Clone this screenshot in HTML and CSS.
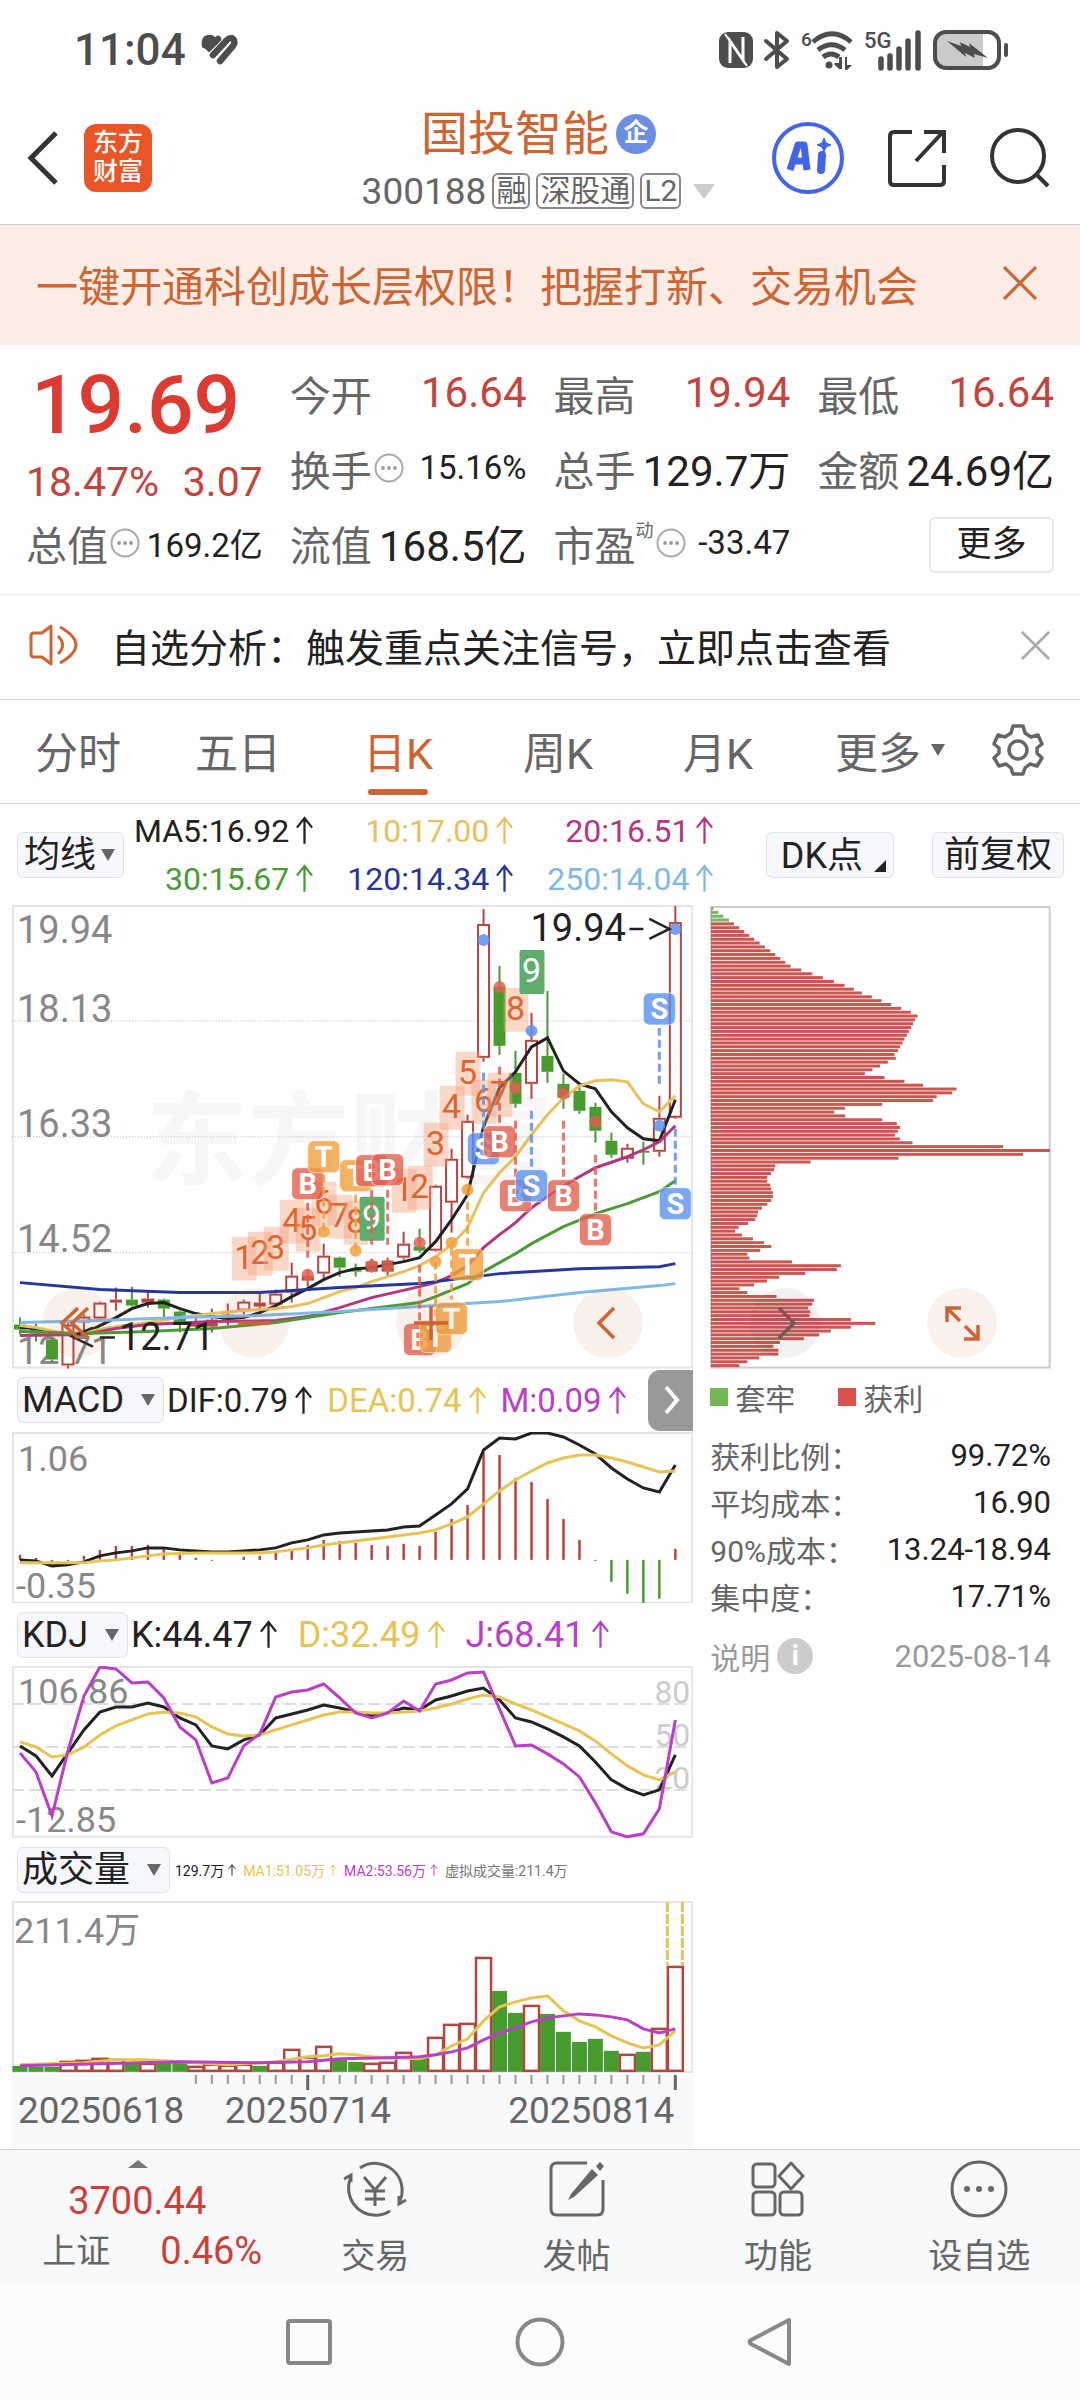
FILE: index.html
```html
<!DOCTYPE html>
<html lang="zh-CN">
<head>
    <meta charset="UTF-8">
    <meta name="viewport" content="width=device-width, initial-scale=1.0">
    <title>国投智能 300188</title>
    <link rel="stylesheet" href="styles.css">
</head>
<body>
    <!-- shared icons -->
    <svg width="0" height="0" class="sprite" aria-hidden="true">
        <symbol id="up" viewBox="0 0 20 30"><path d="M10 29V3M2 12l8-10 8 10" fill="none" stroke="currentColor" stroke-width="2.4"/></symbol>
        <symbol id="caret" viewBox="0 0 14 12"><path d="M0 0h14l-7 12z" fill="currentColor"/></symbol>
        <symbol id="dots" viewBox="0 0 30 30"><circle cx="15" cy="15" r="13.5" fill="none" stroke="#aaa" stroke-width="2"/><g fill="#999"><circle cx="9" cy="15" r="1.9"/><circle cx="15" cy="15" r="1.9"/><circle cx="21" cy="15" r="1.9"/></g></symbol>
        <symbol id="close" viewBox="0 0 32 32"><path d="M1 1l30 30M31 1L1 31" fill="none" stroke="currentColor" stroke-width="3"/></symbol>
    </svg>

    <div class="status-bar">
        <div class="status-left">
            <span>11:04</span>
            <svg width="37" height="32" viewBox="0 0 37 32" fill="none" stroke="#4d4d4d" stroke-width="6.5" stroke-linecap="round"><path d="M4 11C3 3 10 2 14 8" fill="#4d4d4d"/><path d="M5 11l3 3L17 5M12 21L26 6c5-5 10 1 6 6L19 27"/></svg>
        </div>
        <div class="status-right">
            <svg width="34" height="36" viewBox="0 0 34 36"><rect width="34" height="36" rx="9" fill="#4d4d4d"/><path d="M11 31V9l13 19V5" fill="none" stroke="#fff" stroke-width="3"/><path d="M6 2l5 7M28 34l-4-6" stroke="#fff" stroke-width="2"/></svg>
            <svg width="26" height="38" viewBox="0 0 26 38"><path d="M2 10l21 18-10 8V2l10 8L2 28" fill="none" stroke="#4d4d4d" stroke-width="4" stroke-linejoin="round" stroke-linecap="round"/></svg>
            <svg width="52" height="40" viewBox="0 0 52 40"><text x="0" y="16" font-size="19" font-weight="500">6</text><g fill="none" stroke="#4d4d4d" stroke-width="5"><path d="M12 12c12-11 26-11 38 0M17 20c9-7 18-7 27 0M22 27c5-4 11-4 16 0"/></g><circle cx="28" cy="35" r="3.5" fill="#4d4d4d"/><path d="M34 33h4v-6h3v12h-3l-5-5zM44 27h2v8h5l-5 5h-2z" fill="#4d4d4d"/></svg>
            <svg width="58" height="40" viewBox="0 0 58 40"><text x="0" y="18" font-size="22" font-weight="500">5G</text><path d="M17 38V29M26 38V26M35 38V19M44 38V11M54 38V3" stroke="#4d4d4d" stroke-width="5.5" stroke-linecap="round"/></svg>
            <svg width="76" height="40" viewBox="0 0 76 40"><path d="M12 4h38v32H12Q4 36 4 28V12Q4 4 12 4z" fill="#cacaca"/><rect x="2" y="2" width="64" height="36" rx="11" fill="none" stroke="#4d4d4d" stroke-width="4"/><path d="M14 11l14 5-1-4 10 5-1-4 19 15-14-4 1 4-10-5 1 4z" fill="#4d4d4d"/><path d="M73 15v10" stroke="#4d4d4d" stroke-width="4" stroke-linecap="round"/></svg>
        </div>
    </div>

    <header class="app-header">
        <div class="header-side">
            <button aria-label="返回"><svg width="31" height="54" viewBox="0 0 31 54"><path d="M29 2L4 27l25 25" fill="none" stroke="#333" stroke-width="5"/></svg></button>
            <div class="logo">东方<br>财富</div>
        </div>
        <div class="header-title">
            <h1>国投智能<span class="badge">企</span></h1>
            <div class="header-code">300188<span class="tag">融</span><span class="tag">深股通</span><span class="tag">L2</span><svg class="code-caret" width="22" height="15" viewBox="0 0 14 12" preserveAspectRatio="none"><path d="M0 0h14l-7 12z" fill="#ccc"/></svg></div>
        </div>
        <div class="header-side header-actions">
            <button aria-label="AI"><svg width="72" height="72" viewBox="0 0 72 72" fill="none" stroke="#4263eb"><circle cx="36" cy="36" r="34" stroke-width="4"/><path d="M18 48l8-25h6l3 25M20 39h14" stroke-width="7" stroke-linejoin="round"/><path d="M50 33l-1 15" stroke-width="8" stroke-linecap="round"/><path d="M52 16l2 5 5 2-5 2-2 5-2-5-5-2 5-2z" fill="#4263eb" stroke-width="1"/></svg></button>
            <button aria-label="分享"><svg width="58" height="58" viewBox="0 0 58 58" fill="none" stroke="#333" stroke-width="4"><path d="M24 3H6Q2 3 2 7v45q0 4 4 4h46q4 0 4-4V36M36 3h20v21M55 3L28 32"/></svg></button>
            <button aria-label="搜索"><svg width="60" height="60" viewBox="0 0 60 60" fill="none" stroke="#333" stroke-width="4"><circle cx="28" cy="28" r="26"/><path d="M46 46l12 12"/></svg></button>
        </div>
    </header>

    <section class="promo">
        <span>一键开通科创成长层权限！把握打新、交易机会</span>
        <button aria-label="关闭"><svg width="34" height="34"><use href="#close"/></svg></button>
    </section>

    <section class="quote">
        <div class="price-block">
            <div class="price">19.69</div>
            <div class="change"><span>18.47%</span><span>3.07</span></div>
        </div>
        <div class="cell"><span class="name">今开</span><span class="value up">16.64</span></div>
        <div class="cell"><span class="name">最高</span><span class="value up">19.94</span></div>
        <div class="cell"><span class="name">最低</span><span class="value up">16.64</span></div>
        <div class="cell"><span class="name">换手</span><svg width="30" height="30"><use href="#dots"/></svg><span class="value small">15.16%</span></div>
        <div class="cell"><span class="name">总手</span><span class="value">129.7万</span></div>
        <div class="cell"><span class="name">金额</span><span class="value">24.69亿</span></div>
        <div class="cell"><span class="name">总值</span><svg width="30" height="30"><use href="#dots"/></svg><span class="value small">169.2亿</span></div>
        <div class="cell"><span class="name">流值</span><span class="value">168.5亿</span></div>
        <div class="cell"><span class="name">市盈<sup>动</sup></span><svg width="30" height="30"><use href="#dots"/></svg><span class="value small">-33.47</span></div>
        <div class="cell cell-more"><button class="more-btn">更多</button></div>
    </section>

    <section class="notice">
        <svg width="50" height="42" viewBox="0 0 50 42" fill="none" stroke="#cd6432" stroke-width="3"><path d="M22 2L13 9H5q-3 0-3 3v18q0 3 3 3h8l9 7zM29 12q9 9 0 18M31 3q32 18 0 36" stroke-linejoin="round"/></svg>
        <p>自选分析：触发重点关注信号，立即点击查看</p>
        <button aria-label="关闭"><svg width="29" height="29"><use href="#close"/></svg></button>
    </section>

    <nav class="tabs">
        <button>分时</button>
        <button>五日</button>
        <button class="active">日K</button>
        <button>周K</button>
        <button>月K</button>
        <button>更多<svg class="tab-caret" width="14" height="12"><use href="#caret"/></svg></button>
        <button aria-label="设置"><svg width="52" height="52" viewBox="0 0 52 52" fill="none" stroke="#666" stroke-width="3.5" stroke-linejoin="round"><path d="M21 2h10l2 7 6 4 7-2 4 9-5 4v5l5 5-5 8-7-2-5 4-2 6H21l-2-6-5-4-7 2-5-8 5-5v-5l-5-4 4-9 7 2 6-4z"/><circle cx="26" cy="26" r="9"/></svg></button>
    </nav>

    <section class="averages">
        <div class="picker picker-tight">
            <select aria-label="主图指标"><option>均线</option></select>
            <svg width="14" height="12"><use href="#caret"/></svg>
        </div>
        <div class="ma-grid">
            <span class="c-black">MA5:16.92<svg><use href="#up"/></svg></span>
            <span class="c-yellow">10:17.00<svg><use href="#up"/></svg></span>
            <span class="c-magenta">20:16.51<svg><use href="#up"/></svg></span>
            <span class="c-green">30:15.67<svg><use href="#up"/></svg></span>
            <span class="c-navy">120:14.34<svg><use href="#up"/></svg></span>
            <span class="c-sky">250:14.04<svg><use href="#up"/></svg></span>
        </div>
        <div class="chart-options">
            <button class="chip-btn dk">DK点<svg width="12" height="12" viewBox="0 0 12 12"><path d="M12 0v12H0z" fill="#222"/></svg></button>
            <button class="chip-btn">前复权</button>
        </div>
    </section>

    <main class="charts">
        <div class="chart-column">
            <svg id="kline" viewBox="0 0 682 464"></svg>
            <div class="indicator">
                <div class="picker">
                    <select aria-label="副图指标一"><option>MACD</option></select>
                    <svg width="14" height="12"><use href="#caret"/></svg>
                </div>
                <div class="readout macd-readout">
                    <span class="c-black">DIF:0.79<svg><use href="#up"/></svg></span>
                    <span class="c-gold">DEA:0.74<svg><use href="#up"/></svg></span>
                    <span class="c-violet">M:0.09<svg><use href="#up"/></svg></span>
                </div>
                <button class="drawer" aria-label="展开"><svg width="18" height="30" viewBox="0 0 18 30"><path d="M3 2l11 13L3 28" fill="none" stroke="#fff" stroke-width="4"/></svg></button>
            </div>
            <svg id="macd" viewBox="0 0 682 172"></svg>
            <div class="indicator">
                <div class="picker">
                    <select aria-label="副图指标二"><option>KDJ</option></select>
                    <svg width="14" height="12"><use href="#caret"/></svg>
                </div>
                <div class="readout">
                    <span class="c-black">K:44.47<svg><use href="#up"/></svg></span>
                    <span class="c-gold">D:32.49<svg><use href="#up"/></svg></span>
                    <span class="c-violet">J:68.41<svg><use href="#up"/></svg></span>
                </div>
            </div>
            <svg id="kdj" viewBox="0 0 682 172"></svg>
            <div class="indicator">
                <div class="picker">
                    <select aria-label="副图指标三"><option>成交量</option></select>
                    <svg width="14" height="12"><use href="#caret"/></svg>
                </div>
                <div class="readout volume-readout">
                    <span class="c-black">129.7万<svg><use href="#up"/></svg></span>
                    <span class="c-gold">MA1:51.05万<svg><use href="#up"/></svg></span>
                    <span class="c-violet">MA2:53.56万<svg><use href="#up"/></svg></span>
                    <span>虚拟成交量:211.4万</span>
                </div>
            </div>
            <svg id="volume" viewBox="0 0 682 172"></svg>
            <svg id="axis" viewBox="0 0 682 76"></svg>
        </div>

        <aside class="cost">
            <svg id="chips" viewBox="0 0 341 464"></svg>
            <div class="legend"><i class="sq green"></i>套牢<i class="sq red"></i>获利</div>
            <dl>
                <div><dt>获利比例：</dt><dd>99.72%</dd></div>
                <div><dt>平均成本：</dt><dd>16.90</dd></div>
                <div><dt>90%成本：</dt><dd>13.24-18.94</dd></div>
                <div><dt>集中度：</dt><dd>17.71%</dd></div>
            </dl>
            <div class="explain"><span>说明</span><i class="info">i</i><time>2025-08-14</time></div>
        </aside>

        <div class="zoom-controls">
            <button aria-label="最早"><svg viewBox="0 0 70 70"><path d="M36 20L20 35l16 15M46 20L30 35l16 15"/></svg></button>
            <button aria-label="缩小"><svg viewBox="0 0 70 70"><path d="M19 35h32"/></svg></button>
            <button aria-label="放大"><svg viewBox="0 0 70 70"><path d="M18 35h34M35 18v34"/></svg></button>
            <button aria-label="左移"><svg viewBox="0 0 70 70"><path d="M41 20L26 35l15 15"/></svg></button>
            <button class="gray" aria-label="右移"><svg viewBox="0 0 70 70"><path d="M29 20l15 15-15 15"/></svg></button>
            <button aria-label="全屏"><svg viewBox="0 0 70 70"><path d="M20 34V20h14M20 20l13 13M51 37v14H37M51 51L38 38"/></svg></button>
        </div>
    </main>

    <footer class="toolbar">
        <button class="index">
            <svg width="20" height="8" viewBox="0 0 20 8"><path d="M0 8L10 0l10 8z" fill="#777"/></svg>
            <span class="index-value">3700.44</span>
            <span class="index-row"><span>上证</span><span class="index-pct">0.46%</span></span>
        </button>
        <button><svg width="66" height="58" viewBox="0 0 66 58"><path d="M18 8a27 27 0 0 1 39 35M48 51A27 27 0 0 1 9 17M2 19l7-4v7M57 36v8l7-4M22 17l11 13 11-13M33 30v16M23 31h20M23 39h20"/></svg>交易</button>
        <button><svg width="58" height="58" viewBox="0 0 58 58"><path d="M39 3H9Q3 3 3 9v40q0 6 6 6h40q6 0 6-6V20"/><path d="M44 9l6 6-24 22-6 3 3-6zM48 6l4-4 4 4-4 5z" fill="#666" stroke="none"/></svg>发帖</button>
        <button><svg width="54" height="58" viewBox="0 0 54 58"><rect x="2" y="4" width="22" height="23" rx="4"/><rect x="2" y="32" width="22" height="23" rx="4"/><rect x="29" y="32" width="22" height="23" rx="4"/><path d="M40 3l12 13-12 13-12-13z" stroke-linejoin="round"/></svg>功能</button>
        <button><svg width="58" height="58" viewBox="0 0 58 58"><circle cx="29" cy="29" r="27"/><g fill="#666" stroke="none"><circle cx="17" cy="29" r="3"/><circle cx="29" cy="29" r="3"/><circle cx="41" cy="29" r="3"/></g></svg>设自选</button>
    </footer>

    <nav class="system-nav">
        <button aria-label="多任务"><svg width="50" height="50" viewBox="0 0 50 50"><rect x="4" y="4" width="42" height="42" rx="2"/></svg></button>
        <button aria-label="主页"><svg width="50" height="50" viewBox="0 0 50 50"><circle cx="25" cy="25" r="22.5"/></svg></button>
        <button aria-label="后退"><svg width="50" height="50" viewBox="0 0 50 50"><path d="M43 3v44L5 27q-3-2 0-4z" stroke-linejoin="round"/></svg></button>
    </nav>

    <script src="app.js"></script>
</body>
</html>
```
FILE: styles.css
```css
* {
    margin: 0;
    padding: 0;
    box-sizing: border-box;
}

body {
    font-family: Roboto, "Noto Sans CJK SC", sans-serif;
    background: #fefefe;
    color: #222;
}

button {
    background: none;
    border: none;
    font: inherit;
    color: inherit;
    cursor: pointer;
}

button svg,
.charts svg {
    display: block;
}

.sprite {
    position: absolute;
}

/* status bar */
.status-bar {
    height: 100px;
    padding: 0 71px 0 74px;
    display: flex;
    align-items: center;
    justify-content: space-between;
    color: #4d4d4d;
}

.status-left,
.status-right {
    display: flex;
    align-items: center;
    gap: 11px;
}

.status-left {
    font-size: 44px;
    font-weight: 500;
    gap: 15px;
}

.status-right svg {
    overflow: visible;
}

.status-right text {
    fill: #4d4d4d;
}

/* header */
.app-header {
    height: 125px;
    padding: 0 30px 0 27px;
    border-bottom: 1px solid #ccc;
    display: grid;
    grid-template-columns: 1fr auto 1fr;
    align-items: center;
}

.header-side {
    display: flex;
    align-items: center;
    gap: 26px;
    padding-bottom: 8px;
}

.header-actions {
    justify-content: flex-end;
    gap: 44px;
}

.logo {
    width: 68px;
    height: 68px;
    padding-top: 4px;
    border-radius: 12px;
    background: #ea5528;
    color: #fff;
    font-size: 25px;
    font-weight: 500;
    line-height: 29px;
    text-align: center;
}

h1 {
    display: flex;
    align-items: center;
    justify-content: center;
    gap: 7px;
    height: 58px;
    font-size: 47px;
    font-weight: 400;
    line-height: 58px;
    color: #cd6432;
}

.badge {
    width: 40px;
    height: 40px;
    border-radius: 50%;
    background: #6a8ee0;
    color: #fff;
    font-size: 25px;
    font-weight: 700;
    line-height: 38px;
    text-align: center;
}

.header-code {
    display: flex;
    align-items: center;
    gap: 6px;
    height: 56px;
    font-size: 37px;
    color: #666;
}

.tag {
    height: 36px;
    padding: 0 2px;
    border: 2px solid #888;
    border-radius: 6px;
    font-size: 30px;
    line-height: 32px;
}

.code-caret {
    margin-left: 6px;
}

/* promo */
.promo {
    height: 120px;
    padding: 0 43px 4px 36px;
    display: flex;
    align-items: center;
    justify-content: space-between;
    background: #fbede6;
    color: #cd6432;
    font-size: 42px;
}

/* quote */
.quote {
    padding: 12px 26px;
    border-bottom: 1px solid #eee;
    display: grid;
    grid-template-columns: repeat(4, 1fr);
    grid-auto-rows: 75px;
    column-gap: 27px;
}

.price-block {
    grid-row: span 2;
}

.price {
    padding-left: 5px;
    font-size: 82px;
    font-weight: 500;
    line-height: 96px;
    color: #dd3a31;
}

.change {
    display: flex;
    justify-content: space-between;
    font-size: 41px;
    line-height: 58px;
    color: #c5433d;
}

.cell {
    display: flex;
    align-items: center;
    padding-bottom: 4px;
    white-space: nowrap;
}

.name {
    font-size: 41px;
    color: #666;
}

.cell svg {
    margin-left: 2px;
}

.name sup {
    font-size: 18px;
    line-height: 18px;
    vertical-align: 24px;
}

.value {
    margin-left: auto;
    font-size: 42px;
}

.value.up {
    color: #c5433d;
}

.value.small {
    font-size: 33px;
}

.cell-more {
    justify-content: flex-end;
    padding-bottom: 0;
}

.more-btn {
    width: 125px;
    height: 56px;
    border: 2px solid #e8e8e8;
    border-radius: 6px;
    font-size: 35px;
    line-height: 50px;
}

/* notice */
.notice {
    height: 105px;
    padding: 0 30px 4px 29px;
    border-bottom: 1px solid #d5d5d5;
    display: flex;
    align-items: center;
    gap: 32px;
    font-size: 39px;
}

.notice button {
    margin-left: auto;
    color: #aaa;
}

/* period tabs */
.tabs {
    height: 104px;
    border-bottom: 1px solid #d5d5d5;
    display: grid;
    grid-template-columns: repeat(6, 4fr) 3fr;
    font-size: 43px;
    color: #666;
}

.tabs button {
    display: flex;
    align-items: center;
    justify-content: center;
    padding: 0 4px 4px 0;
}

.tabs .active {
    position: relative;
    color: #cd6432;
}

.tabs .active::after {
    content: "";
    position: absolute;
    bottom: 8px;
    left: calc(50% - 32px);
    width: 60px;
    height: 6px;
    border-radius: 3px;
    background: #cd6432;
}

.tab-caret {
    margin: 0 -24px 0 10px;
}

/* moving averages */
.averages {
    height: 101px;
    padding: 0 16px 0 17px;
    display: flex;
    align-items: center;
}

.picker {
    position: relative;
    flex: none;
}

.picker select,
.chip-btn {
    appearance: none;
    height: 46px;
    border: 1px solid #dfe2e6;
    border-radius: 6px;
    background: #f6f7fa;
    color: #222;
    font-family: inherit;
    font-size: 36px;
    line-height: 42px;
}

.picker select {
    display: block;
    padding: 0 38px 0 4px;
}

.picker svg {
    position: absolute;
    top: 17px;
    right: 9px;
    color: #666;
}

.picker-tight select {
    padding: 0 26px 0 6px;
}

.ma-grid {
    display: grid;
    grid-template-columns: repeat(3, auto);
    column-gap: 33px;
    margin-left: 10px;
    font-size: 32px;
    line-height: 48px;
}

.ma-grid span,
.readout span {
    display: flex;
    align-items: center;
    justify-content: flex-end;
    gap: 6px;
    white-space: nowrap;
}

.ma-grid svg,
.readout svg {
    width: 19px;
    height: 29px;
}

.chart-options {
    display: flex;
    gap: 38px;
    margin-left: auto;
}

.chip-btn {
    padding: 0 11px;
}

.dk {
    display: flex;
    align-items: flex-end;
    gap: 11px;
    padding: 0 7px 0 14px;
}

.dk svg {
    margin-bottom: 5px;
}

.c-black { color: #222; }
.c-yellow { color: #e9c05f; }
.c-magenta { color: #b5357f; }
.c-green { color: #4a9a35; }
.c-navy { color: #27369b; }
.c-sky { color: #7fb9e6; }
.c-gold { color: #e6c454; }
.c-violet { color: #b93fc8; }

/* charts */
.charts {
    position: relative;
    padding: 0 29px 0 12px;
    display: grid;
    grid-template-columns: 2fr 1fr;
    column-gap: 17px;
}

.chart-column > svg,
.cost > svg {
    width: 100%;
}

.indicator {
    position: relative;
    height: 63px;
    padding-left: 5px;
    display: flex;
    align-items: center;
}

.readout {
    display: flex;
    gap: 20px;
    margin-left: 3px;
    font-size: 36px;
    color: #777;
}

.macd-readout {
    gap: 14px;
    font-size: 33px;
}

.volume-readout {
    gap: 7px;
    margin-left: 5px;
    font-size: 14px;
}

.volume-readout span {
    gap: 4px;
}

.volume-readout svg {
    width: 8px;
    height: 24px;
}

.drawer {
    position: absolute;
    top: 1px;
    right: 0;
    width: 45px;
    height: 61px;
    padding-left: 15px;
    border-radius: 12px 0 0 12px;
    background: #999;
}

.zoom-controls {
    position: absolute;
    top: 383px;
    left: 42px;
    right: 83px;
    display: flex;
    justify-content: space-between;
}

.zoom-controls button {
    width: 70px;
    height: 70px;
    border-radius: 50%;
    background: rgba(205, 100, 50, 0.09);
}

.zoom-controls .gray {
    background: rgba(60, 60, 60, 0.07);
}

.zoom-controls path {
    fill: none;
    stroke: #cd6432;
    stroke-width: 3.5;
}

.zoom-controls .gray path {
    stroke: #75595a;
}

/* cost distribution */
.legend {
    display: flex;
    align-items: center;
    height: 57px;
    font-size: 30px;
    color: #666;
}

.sq {
    width: 18px;
    height: 18px;
    margin-right: 7px;
    background: #73b656;
}

.sq.red {
    margin-left: 43px;
    background: #d9544f;
}

dl {
    padding-top: 6px;
}

dl div,
.explain {
    display: flex;
    align-items: center;
    justify-content: space-between;
    height: 47px;
    font-size: 30px;
}

dt {
    color: #666;
}

dd,
time {
    font-size: 31px;
}

.explain {
    margin-top: 13px;
    color: #999;
}

.info {
    width: 36px;
    height: 36px;
    margin: 0 auto 0 7px;
    border-radius: 50%;
    background: #ccc;
    color: #fff;
    font-size: 27px;
    font-style: normal;
    font-weight: 700;
    line-height: 36px;
    text-align: center;
}

/* chart text */
.charts text { font-size: 38px; fill: #888; }
.charts .sub { font-size: 36px; }
.charts .level { font-size: 32px; fill: #ccc; }
.charts .date { font-size: 37px; fill: #666; }
.charts .mark { fill: #222; }
.charts .watermark { font-size: 102px; font-weight: 700; fill: #f6f6f6; }
.charts .count { font-size: 34px; fill: #dc6430; }
.charts .signal { font-size: 29px; font-weight: 700; fill: #fff; }
.charts .nine { font-size: 34px; fill: #fff; }

/* bottom toolbar */
.toolbar {
    height: 136px;
    border-top: 1px solid #d0d0d0;
    background: #f7f8fa;
    display: grid;
    grid-template-columns: 274fr repeat(4, 201fr);
    color: #666;
    font-size: 34px;
}

.toolbar button {
    display: flex;
    flex-direction: column;
    align-items: center;
    padding-top: 10px;
    line-height: 50px;
}

.toolbar button > svg {
    margin-bottom: 13px;
    fill: none;
    stroke: #666;
    stroke-width: 3;
}

.toolbar .index svg {
    margin: 0 0 8px 2px;
    stroke: none;
}

.index-value,
.index-pct {
    font-size: 38px;
    color: #cc4038;
}

.index-row {
    display: flex;
    gap: 50px;
    padding-left: 30px;
}

/* android navigation */
.system-nav {
    height: 114px;
    background: #fcfcfc;
    display: flex;
    align-items: center;
    justify-content: center;
    gap: 181px;
}

.system-nav svg {
    fill: none;
    stroke: #888;
    stroke-width: 4;
}
```
FILE: app.js
```javascript
const STEP = 16;
const RED = '#b5453f';
const GREEN = '#489c2f';
const cx = i => 8 + i * STEP;

const line = (x1, y1, x2, y2, color, width = 2, extra = '') =>
    `<line x1="${x1}" y1="${y1}" x2="${x2}" y2="${y2}" stroke="${color}" stroke-width="${width}" ${extra}/>`;

const rect = (x, y, w, h, fill, extra = '') =>
    `<rect x="${x}" y="${y}" width="${w}" height="${h}" fill="${fill}" ${extra}/>`;

const text = (x, y, value, cls = '', anchor = 'start') =>
    `<text x="${x}" y="${y}" class="${cls}" text-anchor="${anchor}">${value}</text>`;

// points are [index, y], so long flat stretches can skip days
const curve = (points, color, width = 3) =>
    `<polyline points="${points.map(([i, y]) => cx(i) + ',' + y).join(' ')}" fill="none" stroke="${color}" stroke-width="${width}"/>`;

const daily = values => values.map((y, i) => [i, y]);

const frame = (w, h, color = '#e4e4e4') =>
    rect(1, 1, w - 2, h - 2, 'none', `stroke="${color}" stroke-width="2"`);

// ---- candlesticks ----
// [high, body top, body bottom, low, type]  r = hollow red, R = solid red, g = green
const candles = [
    [413, 420, 425, 430, 'g'], [419, 423, 429, 437, 'g'], [433, 435, 455, 458, 'g'], [418, 420, 461, 464, 'r'],
    [410, 412, 418, 428, 'r'], [397, 398, 414, 415, 'r'], [383, 395, 398, 406, 'R'], [382, 395, 401, 402, 'g'],
    [387, 394, 398, 403, 'r'], [394, 395, 404, 413, 'g'], [406, 407, 420, 428, 'g'], [413, 417, 422, 423, 'R'],
    [404, 415, 422, 428, 'R'], [399, 410, 415, 421, 'R'], [395, 397, 406, 410, 'r'], [389, 398, 402, 406, 'R'],
    [385, 389, 400, 401, 'r'], [358, 371, 388, 398, 'r'], [365, 371, 376, 382, 'R'], [339, 351, 369, 374, 'r'],
    [352, 353, 363, 372, 'g'], [359, 364, 367, 372, 'g'], [354, 357, 367, 368, 'R'], [353, 356, 367, 371, 'R'],
    [327, 339, 353, 355, 'r'], [324, 342, 346, 348, 'g'], [280, 281, 346, 347, 'r'], [244, 254, 298, 328, 'r'],
    [210, 216, 273, 274, 'r'], [4, 19, 153, 157, 'r'], [61, 82, 141, 150, 'g'], [146, 168, 199, 203, 'g'],
    [108, 135, 179, 194, 'r'], [86, 151, 167, 178, 'g'], [169, 179, 193, 204, 'g'], [181, 186, 206, 209, 'g'],
    [198, 202, 226, 238, 'g'], [228, 236, 250, 253, 'g'], [239, 243, 254, 258, 'r'], [237, 246, 248, 260, 'g'],
    [191, 213, 247, 252, 'r'], [1, 17, 213, 214, 'r']
];

const ma5 = daily([423, 424, 427, 430, 429, 421, 413, 404, 399, 398, 404, 409, 412, 414, 413, 408, 401, 392, 384, 375, 368,
    364, 363, 360, 357, 353, 337, 315, 290, 222, 183, 167, 142, 133, 166, 179, 184, 207, 223, 234, 236, 195]);
const ma10 = [[0, 421], [1, 423], [3, 430], [4, 428], [6, 422], [8, 418], [10, 413], [12, 409], [14, 406], [16, 404], [17, 402],
    [18, 399], [19, 393], [20, 387], [21, 383], [22, 377], [23, 372], [24, 367], [25, 361], [26, 352], [27, 340], [28, 323],
    [29, 288], [30, 268], [31, 252], [32, 230], [33, 210], [34, 193], [35, 181], [36, 176], [37, 175], [38, 177], [39, 199],
    [40, 207], [41, 191]];
const ma20 = [[0, 431], [4, 430], [6, 424], [8, 420], [12, 417], [16, 416], [18, 412], [20, 403], [21, 398], [22, 393],
    [25, 382], [26, 378], [27, 371], [28, 361], [29, 343], [30, 330], [31, 318], [32, 303], [33, 292], [34, 281], [36, 263],
    [38, 252], [39, 245], [40, 237], [41, 221]];
const ma30 = [[0, 427], [4, 429], [8, 427], [12, 424], [16, 418], [18, 413], [20, 408], [22, 404], [25, 398], [26, 392],
    [28, 379], [29, 367], [31, 349], [32, 339], [34, 322], [36, 309], [38, 299], [40, 287], [41, 276]];
const ma120 = [[0, 378], [5, 385], [10, 388], [15, 388], [20, 383], [25, 379], [30, 369], [35, 364], [40, 362], [41, 359]];
const ma250 = [[0, 418], [5, 416], [10, 413], [15, 411], [20, 407], [25, 402], [30, 397], [35, 388], [40, 381], [41, 379]];

// [index, box top, number]
const counts = [
    [14, 332, 1], [15, 327, 2], [16, 322, 3], [17, 295, 4], [18, 303, 5], [19, 277, 6], [20, 290, 7], [21, 296, 8], [22, 292, 9],
    [24, 264, 1], [25, 261, 2], [26, 218, 3], [27, 181, 4], [28, 147, 5], [29, 175, 6], [30, 168, 7], [31, 83, 8], [32, 45, 9]
];

// [index, letter, badge centre, dot, dash start, dash end]
const signals = [
    [18, 'B', 279, 370, 298, 353], [19, 'T', 252, 327, 270, 325], [21, 'T', 271, 346, 290, 345], [22, 'B', 266, 361, 285, 340],
    [23, 'B', 265, 361, 285, 340], [29, 'S', 244, 35, 168, 228], [30, 'B', 237, 82, 162, 220], [31, 'B', 291, 183, 216, 275],
    [32, 'S', 281, 126, 206, 263], [34, 'B', 291, 189, 216, 275], [36, 'B', 325, 217, 250, 307], [40, 'S', 104, 221, 123, 179],
    [41, 'S', 299, 24, 224, 282], [28, 'T', 360, 285, 297, 342], [25, 'B', 435, 338, 360, 418], [26, 'T', 432, 357, 357, 412],
    [27, 'T', 414, 338, 343, 395]
];
const signalColor = { B: '#e2604f', T: '#f0a03c', S: '#5a90f0' };

function drawKline() {
    let out = text(134, 272, '东方财富', 'watermark') + frame(682, 464);
    [116, 232, 348].forEach(y => {
        out += line(0, y, 682, y, '#bbb', 1, 'stroke-dasharray="1 2"');
    });
    [['19.94', 38], ['18.13', 117], ['16.33', 232], ['14.52', 347], ['12.71', 459]].forEach(([label, y]) => {
        out += text(5, y, label);
    });

    candles.forEach(([high, top, bottom, low, type], i) => {
        const x = cx(i);
        const color = type === 'g' ? GREEN : RED;
        out += line(x, high, x, top, color) + line(x, bottom, x, low, color);
        if (type === 'r') {
            out += rect(x - 5.5, top + 1, 11, Math.max(bottom - top - 2, 1), '#fff', `stroke="${color}" stroke-width="2"`);
        } else {
            out += rect(x - 6, top, 12, bottom - top, color);
        }
    });

    out += curve(ma5, '#222') + curve(ma10, '#e9c05f') + curve(ma20, '#b5357f')
        + curve(ma30, '#4a9a35') + curve(ma120, '#27369b') + curve(ma250, '#7fb9e6');

    counts.forEach(([i, y, n]) => {
        const nine = n === 9;
        out += rect(cx(i) - 12, y, 25, 44, nine ? '#5fad6c' : '#f2a077', nine ? 'rx="2"' : 'rx="2" fill-opacity="0.4"');
        out += text(cx(i), y + 32, n, nine ? 'nine' : 'count', 'middle');
    });

    signals.forEach(([i, letter, y, dot, from, to]) => {
        const x = cx(i);
        const color = signalColor[letter];
        out += line(x, from, x, to, color, 3, 'stroke-dasharray="8 4" stroke-opacity="0.85"');
        out += `<circle cx="${x}" cy="${dot}" r="6" fill="${color}" fill-opacity="0.85"/>`;
        out += rect(x - 16, y - 16, 32, 32, color, 'rx="6" fill-opacity="0.8" stroke="#fff" stroke-opacity="0.6"');
        out += text(x, y + 10, letter, 'signal', 'middle');
    });

    // high and low pointers
    out += text(519, 36, '19.94', 'mark');
    out += `<path d="M618 24h14M638 14l20 10-20 10" fill="none" stroke="#222" stroke-width="2.5"/>`;
    out += text(107, 445, '12.71', 'mark');
    out += `<path d="M88 433h15M81 442l-21-10 21-9" fill="none" stroke="#222" stroke-width="2.5"/>`;
    document.getElementById('kline').innerHTML = out;
}

// ---- MACD ----
const histogram = [123, 126, 132, 129, 124, 118, 114, 114, 113, 117, 122, 126, 129, 128, 125, 124, 121, 117, 113, 108, 109,
    111, 113, 114, 112, 114, 100, 87, 73, 20, 23, 46, 50, 67, 87, 108, 129, 150, 162, 171, 167, 117];
const dif = daily([128, 129, 134, 133, 130, 124, 121, 119, 116, 116, 118, 119, 120, 120, 119, 118, 116, 111, 108, 103, 101,
    100, 99, 98, 95, 94, 83, 72, 57, 18, 6, 7, 1, 1, 5, 13, 22, 36, 47, 56, 60, 33]);
const dea = [[0, 131], [4, 131], [5, 129], [6, 128], [7, 126], [8, 124], [9, 122], [11, 121], [15, 121], [16, 120], [17, 118],
    [18, 116], [19, 113], [21, 109], [23, 105], [25, 101], [26, 98], [27, 92], [28, 85], [29, 72], [30, 59], [31, 48], [32, 39],
    [33, 31], [34, 26], [35, 23], [36, 23], [37, 26], [38, 30], [39, 35], [40, 40], [41, 39]];

function drawMacd() {
    let out = frame(682, 172) + text(6, 39, '1.06', 'sub') + text(4, 166, '-0.35', 'sub');
    histogram.forEach((y, i) => {
        out += line(cx(i), 128, cx(i), y, y > 128 ? GREEN : RED, 2.5);
    });
    out += curve(dif, '#222') + curve(dea, '#e6c454');
    document.getElementById('macd').innerHTML = out;
}

// ---- KDJ ----
const k = daily([80, 90, 110, 87, 64, 46, 41, 41, 37, 41, 52, 59, 80, 83, 74, 69, 52, 48, 44, 39, 42, 46, 50, 47, 42, 44, 34,
    30, 25, 22, 34, 52, 56, 63, 71, 80, 96, 114, 123, 129, 124, 89]);
const d = daily([76, 81, 91, 89, 81, 69, 60, 54, 48, 46, 47, 51, 61, 68, 70, 69, 64, 59, 54, 49, 46, 46, 47, 47, 46, 45, 42,
    38, 33, 29, 31, 38, 44, 51, 58, 65, 75, 88, 100, 109, 114, 106]);
const j = daily([87, 106, 150, 85, 30, 1, 3, 17, 16, 32, 61, 74, 117, 112, 80, 68, 31, 26, 24, 18, 32, 47, 52, 47, 35, 45, 18,
    14, 7, 6, 43, 80, 79, 88, 98, 111, 137, 166, 171, 168, 143, 54]);

function drawKdj() {
    let out = frame(682, 172) + text(6, 38, '106.86', 'sub') + text(4, 166, '-12.85', 'sub');
    [[80, 38], [50, 81], [20, 124]].forEach(([level, y]) => {
        out += line(0, y, 682, y, '#ddd', 2, 'stroke-dasharray="12 5"');
        out += text(679, y - 1, level, 'level', 'end');
    });
    out += curve(k, '#222') + curve(d, '#e6c454') + curve(j, '#b93fc8');
    document.getElementById('kdj').innerHTML = out;
}

// ---- volume ----
const volumeTops = [165, 166, 166, 160, 159, 157, 158, 162, 162, 162, 162, 165, 163, 164, 163, 165, 161, 148, 156, 145, 159,
    161, 162, 161, 151, 156, 136, 123, 122, 56, 90, 112, 104, 113, 131, 141, 138, 150, 153, 151, 127, 65];
const volumeTypes = 'gggrrrrgrggrrrrgrrrrggrrrgrrrrggrgggggrgrr';
const vma1 = [[0, 164], [4, 162], [6, 159], [8, 159], [10, 161], [13, 164], [16, 161], [18, 156], [19, 155], [20, 153],
    [21, 154], [22, 156], [23, 157], [25, 158], [26, 154], [27, 145], [28, 138], [29, 120], [30, 106], [31, 101], [32, 97],
    [33, 95], [34, 110], [35, 120], [36, 126], [37, 135], [38, 142], [39, 147], [40, 144], [41, 130]];
const vma2 = [[0, 165], [5, 163], [10, 161], [15, 162], [18, 161], [20, 158], [23, 157], [25, 156], [26, 154], [27, 151],
    [28, 147], [29, 139], [30, 132], [31, 127], [32, 121], [33, 117], [34, 115], [35, 113], [36, 114], [37, 116], [38, 119],
    [39, 128], [40, 132], [41, 128]];

function drawVolume() {
    let out = frame(682, 172) + text(2, 42, '211.4万', 'sub');
    volumeTops.forEach((y, i) => {
        const x = cx(i);
        if (volumeTypes[i] === 'g') {
            out += rect(x - 7.5, y, 15, 171 - y, GREEN);
        } else {
            out += rect(x - 7.5, y + 1, 15, 169 - y, '#fff', `stroke="${RED}" stroke-width="2.5"`);
        }
    });
    out += line(664 - 8, 1, 664 - 8, 64, '#e6c454', 3, 'stroke-dasharray="10 2"');
    out += line(664 + 7, 1, 664 + 7, 64, '#e6c454', 3, 'stroke-dasharray="10 2"');
    out += curve(vma1, '#e6c454') + curve(vma2, '#b93fc8');
    document.getElementById('volume').innerHTML = out;
}

function drawAxis() {
    let out = rect(0, 1, 682, 75, '#f7f8fa');
    for (let i = 11; i < 42; i++) {
        const major = i === 18 || i === 41;
        out += line(cx(i), 2, cx(i), major ? 17 : 11, major ? '#666' : '#999', major ? 3 : 2);
    }
    out += text(6, 50, '20250618', 'date') + text(213, 50, '20250714', 'date') + text(663, 50, '20250814', 'date', 'end');
    document.getElementById('axis').innerHTML = out;
}

// ---- cost distribution, 1018 is the full width ----
const chips = [7, 22, 37, 54, 69, 85, 100, 115, 130, 146, 162, 178, 193, 208, 223, 239, 271, 304, 336, 369, 401, 429, 453, 483,
    512, 541, 571, 600, 620, 613, 607, 601, 594, 588, 581, 575, 568, 562, 551, 555, 531, 508, 485, 462, 521, 581, 637, 737, 724,
    678, 667, 514, 402, 370, 403, 514, 558, 568, 561, 552, 567, 605, 877, 1018, 937, 563, 299, 193, 190, 180, 169, 169, 178, 181,
    186, 186, 181, 169, 153, 141, 139, 133, 111, 83, 72, 93, 126, 159, 181, 148, 109, 115, 243, 390, 378, 283, 205, 168, 129, 85,
    109, 197, 309, 304, 292, 298, 296, 420, 493, 420, 360, 325, 279, 207, 187, 202, 202, 145, 109, 85];

function drawChips() {
    let out = rect(1, 2, 339, 461, '#fff', 'stroke="#ccc" stroke-width="2"');
    chips.forEach((value, i) => {
        out += rect(1, 2 + i * 3.845, value / 3, 3, i < 4 ? '#7ab365' : '#cb5551');
    });
    document.getElementById('chips').innerHTML = out;
}

drawKline();
drawMacd();
drawKdj();
drawVolume();
drawAxis();
drawChips();
```
